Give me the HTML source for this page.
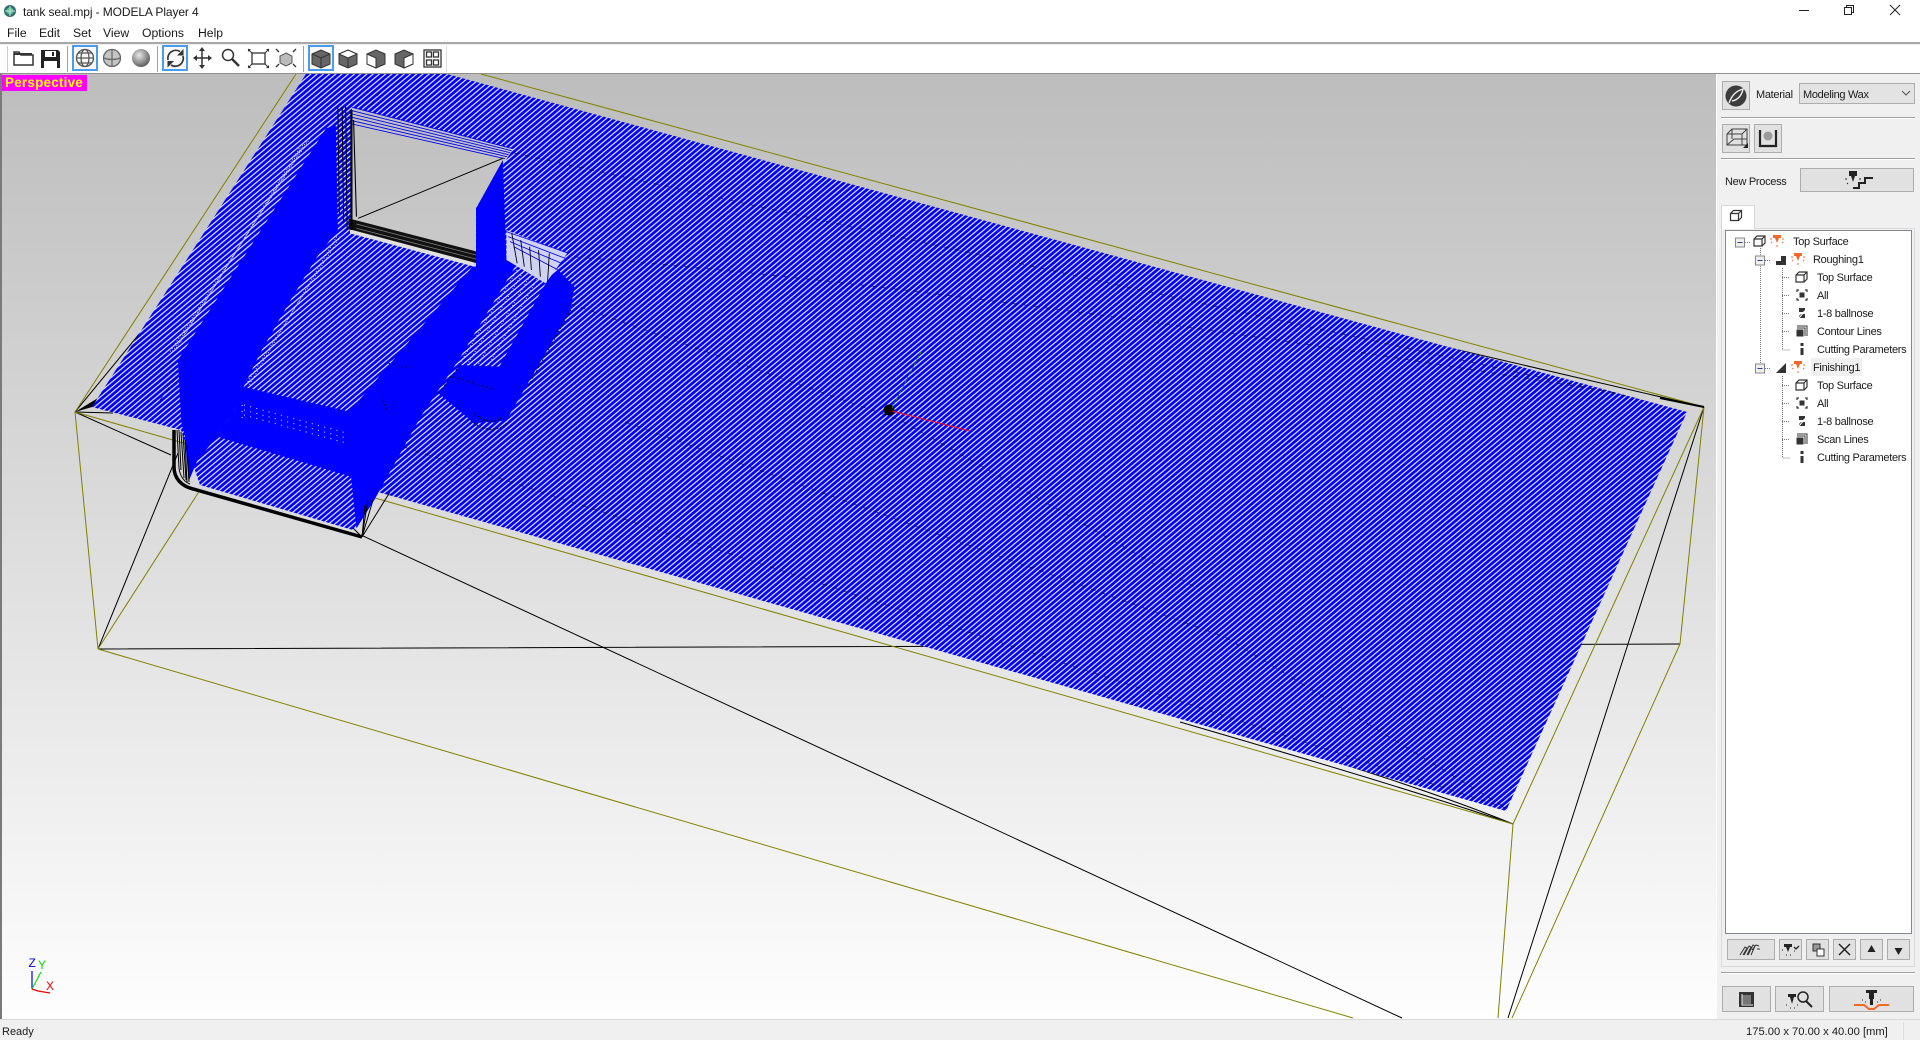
<!DOCTYPE html>
<html><head><meta charset="utf-8"><title>tank seal.mpj - MODELA Player 4</title>
<style>
html,body{margin:0;padding:0;width:1920px;height:1040px;overflow:hidden;background:#f0f0f0}
body{position:relative;font:12px "Liberation Sans",sans-serif;color:#1a1a1a}
.t{position:absolute;white-space:nowrap;font:11px/16px "Liberation Sans",sans-serif;letter-spacing:-.3px}
.m{position:absolute;white-space:nowrap;font:12.2px/16px "Liberation Sans",sans-serif}
.b{position:absolute;box-sizing:border-box;background:#e1e1e1;border:1px solid #adadad}
.l{position:absolute;height:1px;background:#a0a0a0;box-shadow:0 1px 0 #fff}
.sel{position:absolute;box-sizing:border-box;width:26px;height:26px;border:2px solid #4a9cf0;background:#f8f8f8;top:45px}
.sep{position:absolute;width:1px;height:26px;top:46px;background:#a0a0a0}
svg{position:absolute;overflow:visible}
</style></head><body>
<!-- top bars -->
<div style="position:absolute;left:0;top:0;width:1920px;height:42px;background:#fff"></div>
<div style="position:absolute;left:0;top:42px;width:1920px;height:2px;background:#a8a8a8;border-bottom:1px solid #eee"></div>
<div style="position:absolute;left:0;top:45px;width:1920px;height:28px;background:#fff"></div>
<div style="position:absolute;left:0;top:73px;width:1920px;height:1px;background:#8f8f8f"></div>
<svg style="left:0;top:0" width="24" height="24"><circle cx="10" cy="11" r="6" fill="#2f6f6f"/><circle cx="10" cy="11" r="3.6" fill="#59c48a"/><path d="M10 6v10M5 11h10" stroke="#cde" stroke-width="1"/></svg>
<div class="m" style="left:23px;top:4px;font-size:12px;letter-spacing:-.1px">tank seal.mpj - MODELA Player 4</div>
<div class="m" style="left:7px;top:25px">File</div>
<div class="m" style="left:39px;top:25px">Edit</div>
<div class="m" style="left:73px;top:25px">Set</div>
<div class="m" style="left:103px;top:25px">View</div>
<div class="m" style="left:142px;top:25px">Options</div>
<div class="m" style="left:198px;top:25px">Help</div>
<svg style="left:0;top:0" width="1920" height="20"><path d="M1799 10.500h10" stroke="#222"/><path d="M1844.500 7.500h7v7h-7zM1846.500 7.500v-2h7v7h-2" fill="none" stroke="#222"/><path d="M1890 5l10 10M1900 5l-10 10" stroke="#222"/></svg>

<!-- toolbar -->
<div class="sep" style="left:7px;background:#ccc"></div><div class="sep" style="left:67px"></div><div class="sep" style="left:157px"></div><div class="sep" style="left:303px"></div><div class="sep" style="left:446px;background:#ddd"></div>
<div class="sel" style="left:72px"></div><div class="sel" style="left:162px"></div><div class="sel" style="left:308px"></div>
<svg style="left:0;top:0" width="460" height="74">
<path d="M14 52h5l2 3h12v10H14z" fill="#fff" stroke="#333" stroke-width="1.500"/><path d="M14 54h18" stroke="#333" stroke-width="2"/>
<path d="M41 50h17l2 2v16H41z" fill="#222"/><rect x="45" y="51" width="11" height="6" fill="#fff"/><rect x="44" y="61" width="13" height="7" fill="#fff"/><rect x="52" y="52" width="2" height="4" fill="#222"/>
<g fill="none" stroke="#555" stroke-width="1.300"><circle cx="85" cy="58" r="8.500"/><ellipse cx="85" cy="58" rx="4" ry="8.500"/><path d="M76.500 58h17M78 53h14M78 63h14"/></g>
<circle cx="112" cy="58" r="8.500" fill="#c4c4c4" stroke="#666" stroke-width="1.300"/><path d="M103.500 58q8.500 3 17 0M112 49.500v17" stroke="#666" stroke-width="1.200" fill="none"/>
<defs><radialGradient id="sp" cx=".4" cy=".35" r=".7"><stop offset="0" stop-color="#e8e8e8"/><stop offset="1" stop-color="#555"/></radialGradient></defs>
<circle cx="141" cy="58" r="9" fill="url(#sp)"/>
<g fill="none" stroke="#333" stroke-width="1.700"><path d="M168 60A8 8 0 0 1 180 51.500M183 56A8 8 0 0 1 171 65"/></g><path d="M183.500 49v6.500H177zM167.500 67.500v-6.500h6.500z" fill="#333"/>
<path d="M202 50v16M194 58h17" stroke="#333" stroke-width="1.500"/><path d="M202 47l-3 4h6zM202 69l-3-4h6zM193 58l4-3v6zM212 58l-4-3v6z" fill="#333"/>
<circle cx="228" cy="55" r="5.500" fill="#fff" stroke="#333" stroke-width="1.500"/><path d="M232 59l7 7" stroke="#333" stroke-width="2.500"/>
<rect x="252" y="53" width="13" height="11" fill="#fff" stroke="#333" stroke-width="1.300"/><path d="M248 49l4 4M269 49l-4 4M248 68l4-4M269 68l-4-4" stroke="#333"/><path d="M248 49h3l-3 3zM269 49h-3l3 3zM248 68h3l-3-3zM269 68h-3l3-3z" fill="#333"/>
<path d="M286 53l6 3v7l-6 3-6-3v-7z" fill="#bbb" stroke="#555"/><path d="M276 49l3 3M296 49l-3 3M276 67l3-3M296 67l-3-3" stroke="#333" stroke-width="1.300"/>
<g stroke="#333" stroke-width="1">
<path d="M312 54l9-4 9 4v10l-9 4-9-4z" fill="#666"/><path d="M312 54l9 4 9-4M321 58v10" fill="none"/>
<path d="M339 54l9-4 9 4v10l-9 4-9-4z" fill="#666"/><path d="M339 54l9-4 9 4-9 4z" fill="#fff"/><path d="M348 58v10" fill="none"/>
<path d="M367 54l9-4 9 4v10l-9 4-9-4z" fill="#666"/><path d="M367 54l9 4v10l-9-4z" fill="#fff"/>
<path d="M395 54l9-4 9 4v10l-9 4-9-4z" fill="#666"/><path d="M404 58l9-4v10l-9 4z" fill="#fff"/></g>
<g fill="none" stroke="#333" stroke-width="1.300"><rect x="424" y="50" width="17" height="17"/><rect x="426.500" y="52" width="5" height="5"/><rect x="433.500" y="52" width="5" height="5"/><rect x="426.500" y="60" width="5" height="5"/><rect x="433.500" y="60" width="5" height="5"/></g>
</svg>

<!-- viewport -->
<svg style="left:0;top:74px" width="1716" height="946" viewBox="0 74 1716 946">
<defs>
<linearGradient id="bg" x1="0" y1="0" x2="0" y2="1"><stop offset="0" stop-color="#bdbdbd"/><stop offset="1" stop-color="#fefefe"/></linearGradient>
<pattern id="h" width="4" height="4" patternUnits="userSpaceOnUse" patternTransform="rotate(50)"><rect width="4" height="4" fill="#0000f8"/><rect width="1.150" height="4" fill="#f0f0ff"/></pattern>
<clipPath id="vp"><rect x="2" y="74" width="1714" height="945"/></clipPath>
<clipPath id="pl"><path clip-rule="evenodd" d="M306 74H447L1687 412L1506 811L378 492L353 530L200 485L181 430L92 407ZM352 107L513 149L476 208L476 267L351 230Z"/></clipPath>
</defs>
<rect x="0" y="74" width="1716" height="946" fill="url(#bg)"/>
<rect x="0" y="74" width="2" height="946" fill="#7a7a7a"/>
<g clip-path="url(#vp)">
<!-- bounding box lines behind -->
<g fill="none" stroke="#000" stroke-width="1">
<path d="M98 649L1680 644M98 649L178 453M361 535L1402 1018M1704 407L1508 1018"/>
<path d="M75 412L171 455M75 412L113 413M75 412L140 333"/>
<path d="M1513 824Q1400 778 1200 722M1513 824Q1400 786 1180 722"/>
</g>
<g fill="none" stroke="#808000" stroke-width="1">
<path d="M75 412L296 74M75 412L98 649M75 412L1513 824M98 649L200 490M98 649L1353 1018M481 74L1704 407M1704 407L1680 644M1680 644L1512 1018M1704 407L1513 824M1513 824L1498 1018"/></g>
<path d="M75 412L98 398L92 407z" fill="#000"/>
<path d="M1450 348L1704 407" stroke="#000" stroke-width="1" fill="none"/>
<path d="M1660 398L1704 407" stroke="#000" stroke-width="2"/>
<!-- plate -->
<path fill="url(#h)" fill-rule="evenodd" d="M306 74H447L1687 412L1506 811L378 492L353 530L200 485L181 430L92 407ZM352 107L513 149L476 208L476 267L351 230Z"/>
<!-- faint tool-path lines -->
<g clip-path="url(#pl)"><g fill="none" stroke="#000038" stroke-width="1" stroke-dasharray="5 6" opacity=".7">
<path d="M514 153L1690 410M575 257Q1000 290 1690 405M404 447L1506 808M625 422L1225 637L1506 808M560 300L900 420L1200 590M380 92L160 400"/>
</g></g>
<g transform="translate(60 70) scale(.35714 .33333)">
<!-- hole mesh -->
<g stroke="#0000f4" stroke-width="2.600" fill="none"><path d="M818 112L1268 236M818 122L1264 242M818 132L1260 248M818 142L1256 254M818 152L1252 260M818 162L1246 266"/></g>
<path d="M835 445L1240 265" stroke="#000" stroke-width="3"/>
<path d="M808 445L1168 545V580L808 478Z" fill="#111"/>
<g stroke="#888" stroke-width="2"><path d="M830 462L1168 556M830 475L1168 568"/></g>
<path d="M812 490L1160 590V578L812 478Z" fill="#e0e0e0"/>
<g stroke="#000" stroke-width="3" fill="none"><path d="M778 110L782 430M790 110L794 460M800 110L804 480M822 150L830 440M770 180L775 480"/><path d="M816 120V480" stroke-width="6"/></g>
<!-- solid walls -->
<polygon fill="#0000ff" points="745,175 772,165 778,480 720,560 640,700 560,850 510,960 500,1000 440,1100 385,1170 360,1235 350,1100 340,1060 330,870"/>
<polygon fill="#0000ff" points="1240,270 1250,570 1280,580 1110,880 1010,1040 880,1290 830,1375 815,1220 440,1100 500,1000 510,950 810,1025 1155,590 1165,590 1165,415"/>
<polygon fill="#0000ff" points="1395,600 1440,650 1430,720 1310,940 1250,1050 1200,1060 1230,890 1360,640"/>
<polygon fill="#0000ff" points="1120,885 1230,890 1250,1050 1160,1060 1060,970"/>
<!-- dotted strips -->
<g fill="none" stroke="#d8d8ff" stroke-width="3" stroke-dasharray="3 6">
<path d="M700 205L305 850M690 215L315 845M680 225L325 835M670 235L335 820"/>
<path d="M785 500L520 945M775 500L530 945"/>
<path d="M1280 600L1120 880M1300 600L1140 885M1320 610L1170 885M1340 620L1200 885"/>
</g>
<g fill="none" stroke="#d8d8ff" stroke-width="3" stroke-dasharray="3 15">
<path d="M515 1005L805 1090M515 1020L805 1105M515 1035L805 1120M510 1005L510 1045"/>
</g>
<!-- sparse pocket area -->
<polygon points="1250,480 1420,550 1360,640 1250,570" fill="#cfd2f0"/>
<g stroke="#0000f4" stroke-width="2.500" fill="none"><path d="M1250 485L1425 550M1255 500L1415 565M1260 515L1405 580M1270 530L1395 600"/></g>
<g stroke="#000" stroke-width="2.500" fill="none"><path d="M1265 490L1280 580M1290 510L1300 590M1315 530L1320 600M1340 540L1345 620M1370 550L1365 640"/></g>
<path d="M1150 1050C1180 1085 1230 1085 1250 1060M1160 1030C1190 1060 1220 1060 1240 1040" fill="none" stroke="#000" stroke-width="3" stroke-dasharray="6 4"/>
<path d="M1060 970L1120 885M1100 920L1220 960" fill="none" stroke="#000" stroke-width="3" stroke-dasharray="5 9"/>
<path d="M900 980L915 1020M920 880L980 895M1430 720L1310 950" fill="none" stroke="#000" stroke-width="3" stroke-dasharray="4 8"/>
</g>
<!-- thick edge -->
<path d="M174 430V467C174 478 181 486 193 489L362 537" fill="none" stroke="#000" stroke-width="3.500"/>
<g fill="none" stroke="#000" stroke-width="1"><path d="M177 430L179 468C180 476 184 482 190 484M179 430L181 470M181 432L184 478M183 434L186 480M185 440L187 482M187 445L189 482M362 537L373 500M362 537L368 500M362 537L365 505M353 528L362 537M362 537L390 492"/></g>
<circle cx="889" cy="410" r="5.500" fill="#000"/>
<path d="M892 411L970 431" stroke="#ff1010" stroke-width="1"/>
<path d="M892 408L921 352" stroke="#22803a" stroke-width="1" stroke-dasharray="3 1"/>
<!-- triad -->
<path d="M32 989V971" stroke="#0000ff" stroke-width="1.200"/><path d="M32 989L41 972" stroke="#00ee00" stroke-width="1.200"/><path d="M32 989L38 991L44 992L50 993" stroke="#ee0000" stroke-width="1.200" fill="none"/>
<text x="28.500" y="967" font-family="Liberation Sans" font-size="12" fill="#0000ff">Z</text>
<text x="38" y="969" font-family="Liberation Sans" font-size="12" fill="#00dd00">Y</text>
<text x="46" y="990" font-family="Liberation Sans" font-size="12" fill="#ee0000">X</text>
</g>
</svg>
<div style="position:absolute;left:2px;top:75px;width:85px;height:16px;background:#ff00ff"></div>
<div class="m" style="left:5px;top:75px;color:#ffff00;font-weight:bold;font-size:13.500px;letter-spacing:.2px">Perspective</div>

<!-- right panel -->
<div style="position:absolute;left:1716px;top:74px;width:204px;height:946px;background:#f0f0f0;border-left:1px solid #fff;box-sizing:border-box"></div>
<div class="b" style="left:1722px;top:81px;width:28px;height:29px"></div>
<svg style="left:1722px;top:81px" width="28" height="29"><circle cx="14" cy="15" r="10.500" fill="#3c3c3c"/><path d="M7 22C10 14 14 10 21 8C20 14 16 19 10 20" fill="none" stroke="#eee" stroke-width="1.400"/></svg>
<div class="t" style="left:1756px;top:87px">Material</div>
<div class="b" style="left:1799px;top:83px;width:116px;height:21px;background:#e3e3e3"></div>
<div class="t" style="left:1803px;top:87px">Modeling Wax</div>
<svg style="left:1900px;top:88px" width="12" height="10"><path d="M2 3l4 4 4-4" fill="none" stroke="#555"/></svg>
<div class="l" style="left:1721px;top:117px;width:194px"></div>
<div class="b" style="left:1722px;top:124px;width:28px;height:29px"></div>
<div class="b" style="left:1754px;top:124px;width:28px;height:29px"></div>
<svg style="left:1722px;top:124px" width="60" height="29"><g fill="none" stroke="#444" stroke-width="1"><path d="M5 10l5-5h15v16l-5 0H5zM5 10h15v11M20 10l5-5M5 21l7-6h13"/><path d="M10 5v10"/></g><path d="M26 24v-5l-5 5z" fill="#222"/><path d="M38 6v16h16V6" fill="none" stroke="#222" stroke-width="2.200"/><circle cx="46" cy="12" r="4.500" fill="#999"/></svg>
<div class="l" style="left:1721px;top:158px;width:194px"></div>
<div class="t" style="left:1725px;top:174px">New Process</div>
<div class="b" style="left:1800px;top:168px;width:114px;height:24px"></div>
<svg style="left:1800px;top:168px" width="114" height="24"><path d="M49 3h8v5l-2 0-2 6-2-6-2 0z" fill="#222"/><path d="M53 20h6v-5h6v-5h8" fill="none" stroke="#222" stroke-width="2"/><path d="M47 11h-2M59 11h2M48 15l-1 1" stroke="#222"/></svg>

<!-- tab + tree -->
<div style="position:absolute;left:1721px;top:228px;width:194px;height:739px;box-sizing:border-box;border:1px solid #d9d9d9"></div>
<div style="position:absolute;left:1721px;top:205px;width:34px;height:24px;box-sizing:border-box;background:#fff;border:1px solid #d9d9d9;border-bottom:0"></div>
<div style="position:absolute;left:1725px;top:230px;width:187px;height:704px;box-sizing:border-box;background:#fff;border:1px solid #828790"></div>
<div style="position:absolute;left:1811px;top:358px;width:51px;height:18px;background:#f0f0f0"></div>
<svg style="left:0;top:0" width="1920" height="1040">
<defs>
<g id="cube" fill="none" stroke="#333" stroke-width="1.200"><path d="M-5 -2l3 -3h8v7l-3 3H-5zM-5 -2h8v7M3 -2l3-3"/></g>
<g id="fn"><path d="M-4 -6h8v3l-2 0-2 5-2-5-2 0z" fill="#f2692a"/><path d="M-7 -2h2M5 -2h2M-6 2l1-1M6 2l-1-1M0 4v2" stroke="#f2692a" stroke-width="1"/></g>
<g id="all" fill="none" stroke="#333" stroke-width="1.200"><path d="M-5 -3v-2h2M3 -5h2v2M5 3v2H3M-3 5h-2v-2"/><rect x="-2.500" y="-2.500" width="5" height="5" fill="#333" stroke="none"/></g>
<g id="tool"><path d="M-3 -5h6v2L-1 1h4v4h-6v-2l4-4h-4z" fill="#333"/><path d="M-3 5L3 -2" stroke="#fff"/></g>
<g id="cont"><path d="M-5 5v-6h6v6zM-5 -3h8v8M-5 -5h10v10" fill="none" stroke="#333" stroke-width="1"/><rect x="-5" y="-1" width="6" height="6" fill="#333"/></g>
<g id="info"><rect x="-1.500" y="-6" width="3" height="3" fill="#333"/><rect x="-1.500" y="-1" width="3" height="7" fill="#333"/></g>
<g id="exp"><rect x="-4.500" y="-4.500" width="9" height="9" fill="#eee" stroke="#888"/><path d="M-2.500 0h5" stroke="#2a3f9a" stroke-width="1"/></g>
</defs>
<g transform="translate(1735.500 215.500)"><use href="#cube"/></g>
<!-- dotted connectors -->
<g stroke="#777" stroke-dasharray="1 1" fill="none">
<path d="M1760.500 248V364M1782.500 268V350H1790M1782.500 376V458H1790M1745 242.500H1751M1765 260.500H1771M1765 368.500H1771"/>
<path d="M1782 277.500h8M1782 295.500h8M1782 313.500h8M1782 331.500h8M1782 385.500h8M1782 403.500h8M1782 421.500h8M1782 439.500h8"/>
</g>
<use href="#exp" x="1740" y="242.500"/><use href="#exp" x="1760" y="260.500"/><use href="#exp" x="1760" y="368.500"/>
<use href="#cube" x="1759" y="241"/><use href="#fn" x="1777" y="241"/>
<path d="M1776 265v-4h5v-5h5v9z" fill="#333"/><use href="#fn" x="1798" y="259"/>
<path d="M1776 373L1786 363v10z" fill="#333"/><use href="#fn" x="1798" y="367"/>
<use href="#cube" x="1801" y="277"/><use href="#all" x="1802" y="295"/><use href="#tool" x="1802" y="313"/><use href="#cont" x="1802" y="331"/><use href="#info" x="1802" y="349"/>
<use href="#cube" x="1801" y="385"/><use href="#all" x="1802" y="403"/><use href="#tool" x="1802" y="421"/><use href="#cont" x="1802" y="439"/><use href="#info" x="1802" y="457"/>
</svg>
<div class="t" style="left:1793px;top:234px">Top Surface</div>
<div class="t" style="left:1813px;top:252px">Roughing1</div>
<div class="t" style="left:1817px;top:270px">Top Surface</div>
<div class="t" style="left:1817px;top:288px">All</div>
<div class="t" style="left:1817px;top:306px">1-8 ballnose</div>
<div class="t" style="left:1817px;top:324px">Contour Lines</div>
<div class="t" style="left:1817px;top:342px">Cutting Parameters</div>
<div class="t" style="left:1813px;top:360px">Finishing1</div>
<div class="t" style="left:1817px;top:378px">Top Surface</div>
<div class="t" style="left:1817px;top:396px">All</div>
<div class="t" style="left:1817px;top:414px">1-8 ballnose</div>
<div class="t" style="left:1817px;top:432px">Scan Lines</div>
<div class="t" style="left:1817px;top:450px">Cutting Parameters</div>

<!-- bottom button rows -->
<div class="b" style="left:1727px;top:939px;width:48px;height:21px"></div>
<div class="b" style="left:1779px;top:939px;width:23px;height:21px"></div>
<div class="b" style="left:1806px;top:939px;width:23px;height:21px"></div>
<div class="b" style="left:1833px;top:939px;width:23px;height:21px"></div>
<div class="b" style="left:1860px;top:939px;width:23px;height:21px"></div>
<div class="b" style="left:1887px;top:939px;width:23px;height:21px"></div>
<div class="l" style="left:1721px;top:972px;width:194px"></div>
<div class="b" style="left:1722px;top:986px;width:49px;height:26px"></div>
<div class="b" style="left:1775px;top:986px;width:49px;height:26px"></div>
<div class="b" style="left:1829px;top:986px;width:85px;height:26px"></div>
<svg style="left:0;top:0" width="1920" height="1040">
<g fill="none" stroke="#333" stroke-width="1"><path d="M1740 955l5-8 2 1-4 7M1744 955l5-9 2 1-4 8M1748 955l5-10 2 1-4 9M1752 950l4-5 3 1M1757 949h3"/></g>
<path d="M1784 944h8v3h-2l-2 5-2-5h-2z" fill="#222"/><path d="M1794 947l2 2 3-3" fill="none" stroke="#222" stroke-width="1.300"/><path d="M1782 950h1M1794 951h1M1786 955h1M1790 955h1" stroke="#222"/>
<rect x="1813" y="944" width="7" height="7" fill="#999" stroke="#333"/><rect x="1817" y="949" width="7" height="7" fill="#fff" stroke="#333"/>
<path d="M1839 944l11 11M1850 944l-11 11" stroke="#222" stroke-width="1.500"/>
<path d="M1871.500 945l4 7h-8z" fill="#222"/><path d="M1898.500 955l4-7h-8z" fill="#222"/>
<rect x="1739" y="992" width="15" height="15" fill="#333"/><rect x="1742" y="995" width="9" height="9" fill="#777"/><path d="M1742 994v11h11" fill="none" stroke="#eee"/>
<path d="M1788 994h8v3h-2l-2 7-2-7h-2z" fill="#222"/><path d="M1786 1005h1M1797 1005h1M1790 1008h1M1794 1008h1" stroke="#222"/><circle cx="1803" cy="997" r="5" fill="none" stroke="#222" stroke-width="1.500"/><path d="M1806 1001l6 6" stroke="#222" stroke-width="2"/>
<path d="M1866 990h11v3h-3v6h-1v6h-3v-6h-1v-6h-3z" fill="#222"/><path d="M1854 1005h10l5 4h5l5-4h10" fill="none" stroke="#f2692a" stroke-width="2"/><path d="M1865 1002h1M1877 1002h1M1862 1000h1M1880 1000h1" stroke="#222"/>
</svg>

<!-- status -->
<div style="position:absolute;left:0;top:1019px;width:1920px;height:21px;background:#f0f0f0;border-top:1px solid #d9d9d9;box-sizing:border-box"></div>
<div style="position:absolute;left:1903px;top:1022px;width:1px;height:18px;background:#dcdcdc"></div>
<div class="t" style="left:2px;top:1024px;letter-spacing:0">Ready</div>
<div class="t" style="left:1746px;top:1024px;font-size:11.200px;letter-spacing:0">175.00 x 70.00 x 40.00 [mm]</div>
</body></html>
